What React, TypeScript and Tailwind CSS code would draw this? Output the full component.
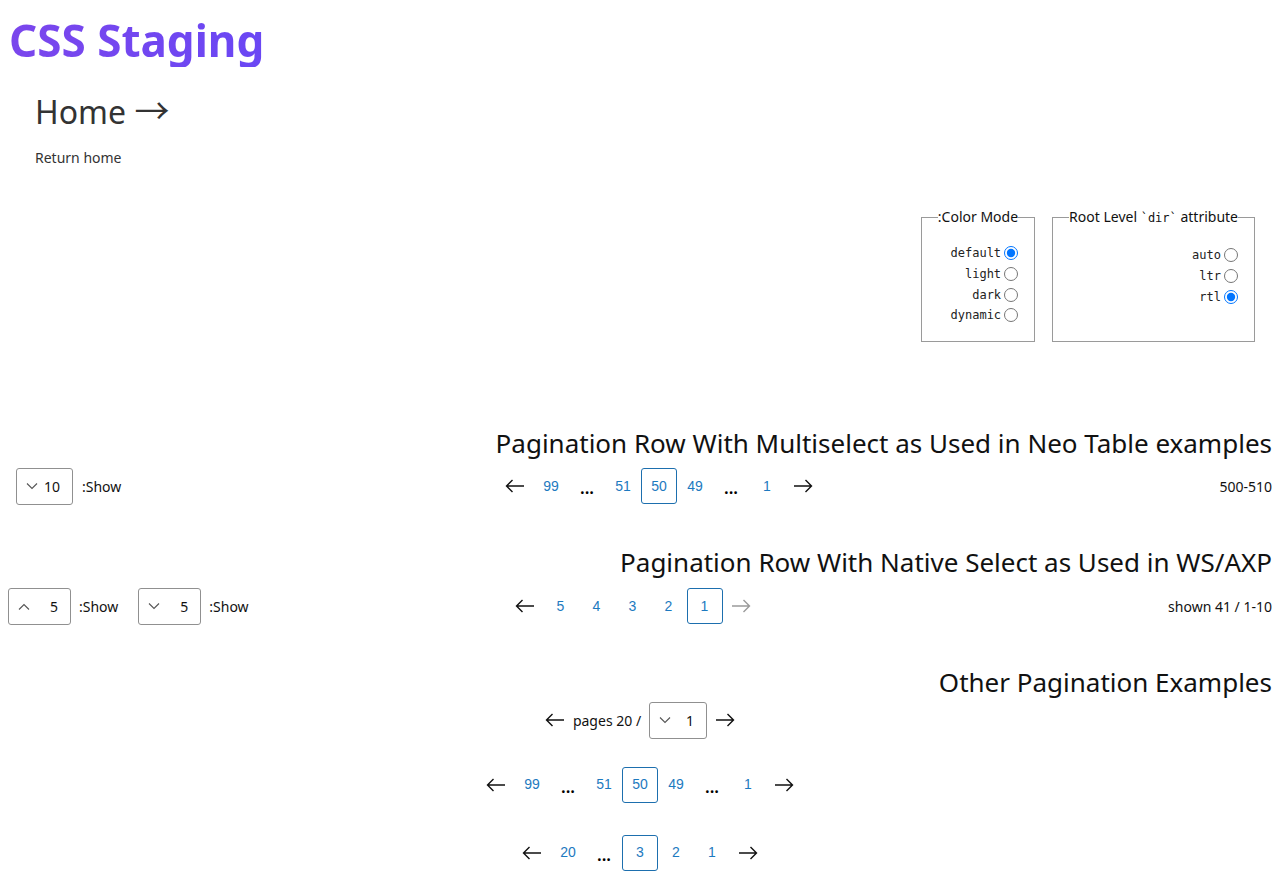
import React from 'react';

const ArrowLeft = ({ muted = false }: { muted?: boolean }) => (
  <svg width="20" height="14" viewBox="0 0 20 14" fill="none" stroke={muted ? '#9a9a9a' : '#111'} strokeWidth="1.4">
    <path d="M19 7H1.5M7.5 1L1.5 7l6 6" />
  </svg>
);

const ArrowRight = ({ muted = false }: { muted?: boolean }) => (
  <svg width="20" height="14" viewBox="0 0 20 14" fill="none" stroke={muted ? '#9a9a9a' : '#111'} strokeWidth="1.4">
    <path d="M1 7h17.5M12.5 1l6 6-6 6" />
  </svg>
);

const Chevron = ({ up = false }: { up?: boolean }) => (
  <svg width="12" height="7" viewBox="0 0 12 7" fill="none" stroke="#555" strokeWidth="1.1">
    <path d={up ? 'M1 6.5L6 1.5l5 5' : 'M1 0.5l5 5 5-5'} />
  </svg>
);

type Cell = number | '...' | 'prev' | 'next' | 'next-off';

const PageCell = ({ cell, active }: { cell: Cell; active: boolean }) => {
  if (cell === 'prev') return <div className="w-9 h-9 flex items-center justify-center"><ArrowLeft /></div>;
  if (cell === 'next') return <div className="w-9 h-9 flex items-center justify-center"><ArrowRight /></div>;
  if (cell === 'next-off') return <div className="w-9 h-9 flex items-center justify-center"><ArrowRight muted /></div>;
  if (cell === '...')
    return <div className="w-9 h-9 flex items-center justify-center pt-[3px] text-[17px] font-semibold text-black">...</div>;
  return (
    <div
      className={`w-9 h-9 flex items-center justify-center text-[14px] text-[#1d7ac0] ${
        active ? 'border border-[#1d6fae] rounded-[3px]' : ''
      }`}
      style={{ fontFamily: '"Liberation Sans", Arial, sans-serif' }}
    >
      {cell}
    </div>
  );
};

const Pager = ({ cells, active }: { cells: Cell[]; active: number }) => (
  <div className="flex items-center">
    {cells.map((c, i) => (
      <PageCell key={i} cell={c} active={c === active} />
    ))}
  </div>
);

const SelectBox = ({ value, up = false, width }: { value: string; up?: boolean; width: string }) => (
  <div className={`${width} h-[37px] border border-[#909090] rounded-[3px] flex items-center justify-between pl-[9px] pr-[12px] text-[14px] text-[#111]`}>
    <Chevron up={up} />
    <span>{value}</span>
  </div>
);

const RadioRow = ({ label, name, checked }: { label: string; name: string; checked?: boolean }) => (
  <label className="flex items-center justify-end h-[20.67px]">
    <span className="text-[12px] text-[#222]" style={{ fontFamily: '"DejaVu Sans Mono", monospace' }}>
      {label}
    </span>
    <input type="radio" name={name} defaultChecked={checked} className="ml-[3px] w-[14px] h-[14px]" />
  </label>
);

const App = () => {
  return (
    <div className="min-h-[884px] bg-white text-[#111]" style={{ fontFamily: '"Noto Sans", "Open Sans", sans-serif' }}>
      {/* Header */}
      <h1 className="pl-[9px] pt-[13px] text-[44px] leading-[54px] font-bold bg-gradient-to-r from-[#7b46ec] to-[#6a47f4] bg-clip-text text-transparent w-fit">
        CSS Staging
      </h1>
      <div className="pl-[35px] pt-[24px]">
        <div className="h-[40px] text-[32px] leading-[40px] text-[#333]">
          Home <span className="text-[35px] leading-none" style={{ fontFamily: '"Noto Sans CJK JP", sans-serif' }}>→</span>
        </div>
        <div className="mt-[17px] text-[14px] leading-5 text-[#333]">Return home</div>
      </div>

      {/* Settings */}
      <div className="flex justify-end gap-[17px] pr-[25px] mt-[39px]">
        <fieldset className="border border-[#9a9a9a] px-4 pb-[14px] w-fit">
          <legend className="px-0 text-[14px] text-[#111] leading-5">:Color Mode</legend>
          <div className="flex flex-col items-end pt-[16px]">
            <RadioRow label="default" name="mode" checked />
            <RadioRow label="light" name="mode" />
            <RadioRow label="dark" name="mode" />
            <RadioRow label="dynamic" name="mode" />
          </div>
        </fieldset>
        <fieldset className="border border-[#9a9a9a] px-4 pb-[34px] w-fit">
          <legend className="px-0 text-[14px] text-[#111] leading-5">
            Root Level <code className="text-[12px]" style={{ fontFamily: '"DejaVu Sans Mono", monospace' }}>`dir`</code> attribute
          </legend>
          <div className="flex flex-col items-end pt-[17px]">
            <RadioRow label="auto" name="dir" />
            <RadioRow label="ltr" name="dir" />
            <RadioRow label="rtl" name="dir" checked />
          </div>
        </fieldset>
      </div>

      {/* Pagination with multiselect */}
      <div className="px-2 mt-[84px]">
        <h2 className="text-right text-[26px] leading-[34px]">Pagination Row With Multiselect as Used in Neo Table examples</h2>
        <div className="grid grid-cols-[1fr_auto_1fr] items-center mt-[8px] text-[14px]">
          <div className="flex items-center gap-[9px] pl-2">
            <SelectBox value="10" width="w-[57px]" />
            <span>:Show</span>
          </div>
          <div className="ml-[38px]">
            <Pager cells={['prev', 99, '...', 51, 50, 49, '...', 1, 'next']} active={50} />
          </div>
          <div className="text-right">500-510</div>
        </div>
      </div>

      {/* Pagination with native select */}
      <div className="px-2 mt-[40px]">
        <h2 className="text-right text-[26px] leading-[34px]">Pagination Row With Native Select as Used in WS/AXP</h2>
        <div className="grid grid-cols-[1fr_auto_1fr] items-center mt-[9px] text-[14px]">
          <div className="flex items-center">
            <SelectBox value="5" up width="w-[63px]" />
            <span className="ml-[8px]">:Show</span>
            <div className="ml-[20px]">
              <SelectBox value="5" width="w-[63px]" />
            </div>
            <span className="ml-[8px]">:Show</span>
          </div>
          <div className="mr-[15px]">
            <Pager cells={['prev', 5, 4, 3, 2, 1, 'next-off']} active={1} />
          </div>
          <div className="text-right">shown 41 / 1-10</div>
        </div>
      </div>

      {/* Other examples */}
      <div className="px-2 mt-[40px]">
        <h2 className="text-right text-[26px] leading-[34px]">Other Pagination Examples</h2>
        <div className="flex flex-col items-center mt-[3px] text-[14px]">
          <div className="flex items-center">
            <ArrowLeft />
            <span className="ml-[8px] mr-[8px]">pages 20 /</span>
            <SelectBox value="1" width="w-[58px]" />
            <span className="ml-[8px]"><ArrowRight /></span>
          </div>
          <div className="mt-[28px]">
            <Pager cells={['prev', 99, '...', 51, 50, 49, '...', 1, 'next']} active={50} />
          </div>
          <div className="mt-[32px]">
            <Pager cells={['prev', 20, '...', 3, 2, 1, 'next']} active={3} />
          </div>
        </div>
      </div>
    </div>
  );
};

export default App;
